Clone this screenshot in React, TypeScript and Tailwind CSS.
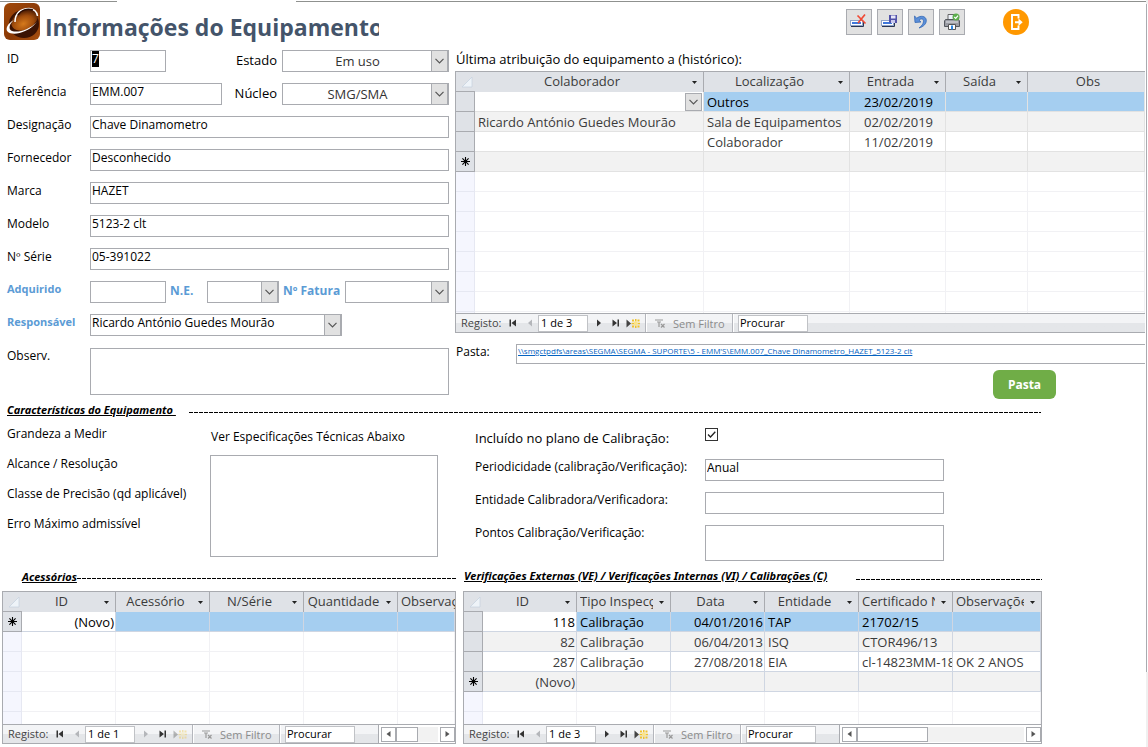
import { useEffect, useRef } from "react";
import type { ReactNode } from "react";

const fieldBox = "border border-[#a9abb0] bg-white text-xs leading-4 text-black outline-none";
const heading = "font-['Noto_Sans','Open_Sans',sans-serif] text-[11px] leading-4 font-bold italic underline";

function Chevron() {
  return (
    <svg viewBox="0 0 9 6" className="h-[6px] w-[9px]" fill="none" stroke="#555" strokeWidth="1.2">
      <path d="M0.5 0.8 L4.5 4.8 L8.5 0.8" />
    </svg>
  );
}

function Combo({ id, value, className, center }: { id: string; value: string; className: string; center?: boolean }) {
  return (
    <div className={`relative h-[22px] shrink-0 ${className}`}>
      <select
        id={id}
        defaultValue={value}
        className={`block h-full w-full appearance-none border border-[#a9abb0] bg-white outline-none ${
          center ? "pr-4 text-center text-[13px] leading-5 text-[#333]" : "pr-4 pb-1 pl-px text-xs leading-4 text-black"
        }`}
      >
        <option value={value}>{value}</option>
      </select>
      <span className="pointer-events-none absolute inset-y-0 right-0 flex w-[18px] items-center justify-center border border-r-2 border-[#a9abb0] bg-[#e1e1e1]">
        <Chevron />
      </span>
    </div>
  );
}

function Field({ id, value, className }: { id: string; value?: string; className: string }) {
  return <input id={id} type="text" defaultValue={value} className={`h-[22px] min-w-0 pb-[5px] pl-px ${fieldBox} ${className}`} />;
}

function FormRow({ id, label, blue, children }: { id: string; label: string; blue?: boolean; children: ReactNode }) {
  return (
    <div className="flex h-[33px] items-start">
      <label htmlFor={id} className={`w-[83px] shrink-0 leading-4 ${blue ? "text-[11px] font-bold text-[#5b9bd5]" : "pt-px text-xs"}`}>
        {label}
      </label>
      {children}
    </div>
  );
}

function Dashes({ className }: { className: string }) {
  return <div className={`h-px bg-[repeating-linear-gradient(90deg,#000_0_4px,transparent_4px_5px)] ${className}`} />;
}

function Asterisk() {
  return (
    <svg viewBox="0 0 9 9" className="mx-auto block size-[9px]" stroke="#000" strokeWidth="1.1">
      <path d="M4.5 0V9M0 4.5H9M1.4 1.4L7.6 7.6M7.6 1.4L1.4 7.6" />
    </svg>
  );
}

type Column = { label: string; width: string; align?: string; menu?: boolean };
type Row = { cells: ReactNode[]; current?: boolean; fresh?: boolean };

function Datasheet({ label, columns, rows, blank, height, line }: {
  label: string;
  columns: Column[];
  rows: Row[];
  blank: number;
  height: string;
  line: string;
}) {
  return (
    <div className={`overflow-hidden ${height}`}>
      <table aria-label={label} className="w-full table-fixed border-separate border-spacing-0 text-[13px] leading-[18px] text-[#3b3b3b]">
        <thead>
          <tr className="h-5 bg-[#dfe2e7]">
            <th className="h-5 w-[19px] border-b border-[#a9abb0] p-0">
              <svg viewBox="0 0 12 12" className="ml-[5px] block size-3">
                <path d="M11 1V11H1Z" fill="#eef3f8" stroke="#c8d3e0" strokeWidth="0.8" />
              </svg>
            </th>
            {columns.map((c, i) => (
              <th
                key={c.label}
                className={`h-5 p-0 pb-[2px] font-normal ${c.width} ${i < columns.length - 1 ? "border-r border-[#a9abb0]" : ""}`}
              >
                <div className="flex items-center pl-[3px]">
                  <span className="min-w-0 flex-1 overflow-hidden whitespace-nowrap text-center">{c.label}</span>
                  {c.menu !== false && (
                    <svg viewBox="0 0 5 3" className="mt-[2px] mr-[6px] ml-[6px] h-[3px] w-[5px] shrink-0">
                      <path d="M0 0H5L2.5 3Z" fill="#222" />
                    </svg>
                  )}
                </div>
              </th>
            ))}
          </tr>
        </thead>
        <tbody>
          {rows.map((r, ri) => (
            <tr key={ri} className={ri % 2 ? "bg-[#f2f2f2]" : "bg-white"}>
              <td className="h-5 border-r border-b border-[#a9abb0] bg-[#dfe2e7] p-0">{r.fresh && <Asterisk />}</td>
              {columns.map((c, i) => (
                <td
                  key={c.label}
                  className={`h-5 overflow-hidden whitespace-nowrap border-r border-b p-0 pr-px pl-[3px] ${line} ${c.align ?? ""} ${
                    r.current && i > 0 ? "bg-[#a5cef0] text-black" : ""
                  } ${r.current && i === 0 ? "text-black" : ""}`}
                >
                  {r.cells[i]}
                </td>
              ))}
            </tr>
          ))}
          {Array.from({ length: blank }, (_, ri) => (
            <tr key={`blank-${ri}`}>
              <td className="h-5 border-r border-b border-[#e6e8f2] bg-[#f5f6fe] p-0" />
              {columns.map((c) => (
                <td key={c.label} className="h-5 border-r border-b border-[#f1f1f4] p-0" />
              ))}
            </tr>
          ))}
        </tbody>
      </table>
    </div>
  );
}

function NavButton({ label, dim, className, children }: { label: string; dim?: boolean; className: string; children: ReactNode }) {
  return (
    <button type="button" aria-label={label} className={`shrink-0 ${dim ? "text-[#b4b6ba]" : "text-[#333]"} ${className}`}>
      <svg viewBox="0 0 8 8" className="block size-2" fill="currentColor">
        {children}
      </svg>
    </button>
  );
}

function Navigator({ id, count, atEnd, thumb }: { id: string; count: string; atEnd?: boolean; thumb?: string }) {
  return (
    <div className="flex h-5 items-center border-y border-[#a9abb0] bg-linear-to-b from-[#f3f4f6] from-50% to-[#e4e6e9] to-50% pl-[5px] text-[11px] leading-4 text-[#444]">
      <label htmlFor={`${id}-pos`} className="w-[48px] shrink-0">Registo:</label>
      <NavButton label="Primeiro registo" className="w-[17px]">
        <path d="M0.500 0.500H2V7.500H0.500ZM7 0.500V7.500L2.5 4Z" />
      </NavButton>
      <NavButton label="Registo anterior" dim className="w-[12px]">
        <path d="M6 0.500V7.500L2 4Z" />
      </NavButton>
      <input id={`${id}-pos`} defaultValue={count} className="h-[17px] w-[50px] shrink-0 border border-[#c0c2c6] bg-white pb-px pl-[2px] text-black outline-none" />
      <NavButton label="Registo seguinte" dim={atEnd} className="ml-[8px] w-[16px]">
        <path d="M1 0.500V7.500L5 4Z" />
      </NavButton>
      <NavButton label="Último registo" className="w-[14px]">
        <path d="M0.5 0.500V7.500L5 4ZM5.5 0.500H7V7.500H5.5Z" />
      </NavButton>
      <button type="button" aria-label="Novo registo" className={`w-[19px] shrink-0 ${atEnd ? "opacity-35" : ""}`}>
        <svg viewBox="0 0 14 9" className="block h-[9px] w-[14px]">
          <path d="M0.5 0.5V8.5L5 4.5Z" fill="#444" />
          <g fill="#f0c22c">
            <path d="M6 0.500H8V2.500H6ZM9 0H10.500V2.500H9ZM11.500 0.500H13.500V2.500H11.500ZM5.500 3.700H8V5.300H5.500ZM11.500 3.700H14V5.300H11.500ZM6 6.500H8V8.500H6ZM9 6.500H10.500V9H9ZM11.500 6.500H13.500V8.500H11.500Z" />
          </g>
          <rect x="8" y="2.500" width="3.500" height="4" fill="#fbe48a" />
        </svg>
      </button>
      <span className="h-full w-[2px] shrink-0 border-r border-white bg-[#b4b6bc]" />
      <button type="button" className="flex w-[85px] shrink-0 items-center gap-2 pt-px pl-2 text-[#8b8b8b]">
        <svg viewBox="0 0 10 9" className="h-[9px] w-[10px]" fill="none" stroke="#999" strokeWidth="1.2">
          <path d="M0 1H8M2 3H6M4 3V8M6 5L9.5 8.5M9.5 5L6 8.5" />
        </svg>
        Sem Filtro
      </button>
      <span className="h-full w-[2px] shrink-0 border-r border-white bg-[#b4b6bc]" />
      <input
        aria-label="Procurar"
        defaultValue="Procurar"
        className="ml-1 h-[17px] w-[70px] shrink-0 border border-[#c0c2c6] bg-white pb-px pl-px text-black outline-none"
      />
      {thumb && (
        <div className="ml-[23px] flex h-full min-w-0 flex-1 items-center border-l border-[#a9abb0] bg-white pl-[2px]">
          <button type="button" aria-label="Deslocar para a esquerda" className="flex h-[15px] w-[15px] shrink-0 items-center justify-center border border-[#a9abb0] bg-white">
            <svg viewBox="0 0 5 8" className="h-2 w-[5px]"><path d="M4.500 1V7L0.500 4Z" fill="#555" /></svg>
          </button>
          <div className="h-[15px] min-w-0 flex-1 bg-[#f2f2f2]">
            <div className={`h-full border border-[#a9abb0] bg-white ${thumb}`} />
          </div>
          <button type="button" aria-label="Deslocar para a direita" className="ml-[2px] flex h-[15px] w-[15px] shrink-0 items-center justify-center border border-[#a9abb0] bg-white">
            <svg viewBox="0 0 5 8" className="h-2 w-[5px]"><path d="M0.500 1V7L4.500 4Z" fill="#555" /></svg>
          </button>
        </div>
      )}
    </div>
  );
}

function Logo() {
  return (
    <svg viewBox="0 0 36 37" className="h-[37px] w-9 shrink-0" aria-hidden="true">
      <defs>
        <linearGradient id="tile" x1="0" y1="0" x2="1" y2="1">
          <stop offset="0" stopColor="#a1490a" />
          <stop offset="0.55" stopColor="#8b3a06" />
          <stop offset="1" stopColor="#a85010" />
        </linearGradient>
        <radialGradient id="orb" cx="0.4" cy="0.65" r="0.7">
          <stop offset="0" stopColor="#d67a1c" />
          <stop offset="0.55" stopColor="#a04c0c" />
          <stop offset="1" stopColor="#3a1202" />
        </radialGradient>
      </defs>
      <rect width="36" height="37" rx="6" fill="url(#tile)" />
      <ellipse cx="20" cy="21" rx="15" ry="14" fill="#3b1303" />
      <ellipse cx="20.500" cy="17" rx="14" ry="9.500" transform="rotate(-28 20.500 17)" fill="url(#orb)" />
      <path d="M11 19C11 10 17 5.500 25 5.500C30 6 33 9 33.500 13" fill="none" stroke="#fff" strokeWidth="1.500" />
      <path d="M14 12C17 7 23 5 29 7" fill="none" stroke="#2a0c02" strokeWidth="1.500" />
      <path d="M10 17C4 20 0.500 26 4 29C9 33 24 30 33 19C25 27 14 30 8 28C4 26.500 5 21 10 17Z" fill="#fff" />
    </svg>
  );
}

function FormGlyph() {
  return (
    <>
      <rect x="0.500" y="7.500" width="12" height="5" fill="#fff" stroke="#8fa3c8" />
      <rect x="2" y="9" width="9" height="2" fill="#3f78dc" />
      <path d="M1 13.500H13.500V8" fill="none" stroke="#2a3550" />
    </>
  );
}

function ToolButton({ label, children }: { label: string; children: ReactNode }) {
  return (
    <button type="button" aria-label={label} title={label} className="flex size-[26px] items-center justify-center border border-[#a9abb0] bg-[#e1e1e1]">
      <svg viewBox="0 0 18 18" className="size-[18px]">{children}</svg>
    </button>
  );
}

function Toolbar() {
  return (
    <div className="flex items-center gap-[5px]">
      <ToolButton label="Eliminar">
        <FormGlyph />
        <path d="M7.500 2.500L15.500 10.500M15 1.500L8 10" stroke="#f04a35" strokeWidth="1.700" fill="none" />
      </ToolButton>
      <ToolButton label="Guardar">
        <FormGlyph />
        <path d="M8 2H16V10H9L8 9Z" fill="#5252a8" />
        <rect x="10" y="2.500" width="4.500" height="3" fill="#e8e8fa" />
        <rect x="10" y="7" width="4" height="3" fill="#c9c9ee" />
      </ToolButton>
      <ToolButton label="Anular">
        <path d="M2.500 3L3 9.500L9 9L7 7.200C9 5.200 11.500 5.500 11.500 8.200C11.500 11 9.500 13 7 15C12 13.500 14.500 10.500 14.300 7.200C14 3 8.500 2 4.800 5.200Z" fill="#5b8fd9" stroke="#3568b4" strokeWidth="0.800" />
      </ToolButton>
      <ToolButton label="Imprimir">
        <path d="M5 7V1.500H12L13 7" fill="#eef2fb" stroke="#666" />
        <path d="M2.500 6.500H15.500L16.500 8V13.500H1.500V8Z" fill="#9a9ca3" stroke="#55585e" />
        <path d="M3 9H15" stroke="#e5e6ea" />
        <path d="M5.500 11.500H12.500V16.500H5.500Z" fill="#fff" stroke="#555" />
        <path d="M9 12.500V16.500" stroke="#2d86e0" strokeWidth="2" />
        <circle cx="13" cy="4" r="3.500" fill="#5cae4c" />
        <path d="M11.300 4L12.700 5.400L15 2.600" fill="none" stroke="#fff" strokeWidth="1.200" />
      </ToolButton>
      <button type="button" aria-label="Sair" className="ml-[33px] block size-[26px] rounded-full">
        <svg viewBox="0 0 26 26" className="size-[26px]">
          <circle cx="13" cy="13" r="13" fill="#ff9800" />
          <path d="M15.500 9.500V6H9V20H15.500V16.500" fill="none" stroke="#fff" strokeWidth="1.900" />
          <path d="M12 12.200H15.500V9.500L19.700 13.200L15.500 17V14.200H12Z" fill="#fff" />
        </svg>
      </button>
    </div>
  );
}

const historyColumns: Column[] = [
  { label: "Colaborador", width: "w-[229px]" },
  { label: "Localização", width: "w-[146px]" },
  { label: "Entrada", width: "w-[96px]", align: "text-center" },
  { label: "Saída", width: "w-[82px]" },
  { label: "Obs", width: "", menu: false },
];

const historyRows: Row[] = [
  {
    current: true,
    cells: [
      <div key="pick" className="flex h-[18px] justify-end">
        <button type="button" aria-label="Escolher colaborador" className="flex w-[17px] items-center justify-center border border-[#a9abb0] bg-[#e1e1e1]">
          <Chevron />
        </button>
      </div>,
      "Outros",
      "23/02/2019",
    ],
  },
  { cells: ["Ricardo António Guedes Mourão", "Sala de Equipamentos", "02/02/2019"] },
  { cells: ["", "Colaborador", "11/02/2019"] },
  { fresh: true, cells: [] },
];

const accessoryColumns: Column[] = [
  { label: "ID", width: "w-[94px]", align: "text-right" },
  { label: "Acessório", width: "w-[94px]" },
  { label: "N/Série", width: "w-[94px]" },
  { label: "Quantidade", width: "w-[94px]" },
  { label: "Observações", width: "", menu: false },
];

const checkColumns: Column[] = [
  { label: "ID", width: "w-[94px]", align: "text-right" },
  { label: "Tipo Inspecção", width: "w-[94px]" },
  { label: "Data", width: "w-[94px]", align: "text-right" },
  { label: "Entidade", width: "w-[94px]" },
  { label: "Certificado N", width: "w-[94px]" },
  { label: "Observações", width: "" },
];

const checkRows: Row[] = [
  { current: true, cells: ["118", "Calibração", "04/01/2016", "TAP", "21702/15"] },
  { cells: ["82", "Calibração", "06/04/2013", "ISQ", "CTOR496/13"] },
  { cells: ["287", "Calibração", "27/08/2018", "EIA", "cl-14823MM-18", "OK 2 ANOS"] },
  { fresh: true, cells: ["(Novo)"] },
];

export default function App() {
  const idField = useRef<HTMLInputElement>(null);

  useEffect(() => {
    idField.current?.focus();
    idField.current?.select();
  }, []);

  return (
    <div className="flex min-h-screen bg-white font-['Open_Sans','Noto_Sans',sans-serif] text-xs leading-4 text-black">
      <main className="min-w-0 flex-1">
        <div className="flex h-[3px] items-center">
          <span className="h-px w-[117px] bg-[#8f918f]" />
          <span className="ml-[179px] h-px flex-1 bg-[#8f918f]" />
        </div>

        <div className="flex">
          <section className="w-[455px] shrink-0">
            <header className="flex h-[47px] items-start gap-[5px] pl-1">
              <Logo />
              <h1 className="w-[334px] overflow-hidden pt-2 text-[23px] leading-8 font-bold whitespace-nowrap text-[#44546a]">
                Informações do Equipamento
              </h1>
            </header>

            <form className="pr-[6px] pl-[7px]">
              <FormRow id="id" label="ID">
                <input
                  ref={idField}
                  id="id"
                  defaultValue="7"
                  className={`h-[22px] w-[76px] pb-[5px] pl-px selection:bg-black selection:text-white ${fieldBox}`}
                />
                <label htmlFor="estado" className="ml-auto pr-[5px] text-[13px] leading-5">Estado</label>
                <Combo id="estado" value="Em uso" className="w-[167px]" center />
              </FormRow>
              <FormRow id="ref" label="Referência">
                <Field id="ref" value="EMM.007" className="w-[132px]" />
                <label htmlFor="nucleo" className="ml-auto pr-[5px] text-[13px] leading-5">Núcleo</label>
                <Combo id="nucleo" value="SMG/SMA" className="w-[167px]" center />
              </FormRow>
              <FormRow id="desig" label="Designação">
                <Field id="desig" value="Chave Dinamometro" className="flex-1" />
              </FormRow>
              <FormRow id="forn" label="Fornecedor">
                <Field id="forn" value="Desconhecido" className="flex-1" />
              </FormRow>
              <FormRow id="marca" label="Marca">
                <Field id="marca" value="HAZET" className="flex-1" />
              </FormRow>
              <FormRow id="modelo" label="Modelo">
                <Field id="modelo" value="5123-2 clt" className="flex-1" />
              </FormRow>
              <FormRow id="serie" label="Nº Série">
                <Field id="serie" value="05-391022" className="flex-1" />
              </FormRow>
              <FormRow id="adq" label="Adquirido" blue>
                <Field id="adq" className="w-[76px]" />
                <label htmlFor="ne" className="w-[41px] pl-1 text-xs leading-5 font-bold text-[#5b9bd5]">N.E.</label>
                <Combo id="ne" value="" className="w-[72px]" />
                <label htmlFor="fatura" className="pl-1 text-xs leading-5 font-bold whitespace-nowrap text-[#5b9bd5]">
                  Nº Fatura
                </label>
                <Combo id="fatura" value="" className="ml-auto w-[104px]" />
              </FormRow>
              <FormRow id="resp" label="Responsável" blue>
                <Combo id="resp" value="Ricardo António Guedes Mourão" className="w-[252px]" />
              </FormRow>
              <div className="flex items-start pt-px">
                <label htmlFor="obs" className="w-[83px] shrink-0">Observ.</label>
                <textarea id="obs" className={`h-[47px] flex-1 resize-none ${fieldBox}`} />
              </div>
            </form>
          </section>

          <section className="min-w-0 flex-1 pr-px">
            <div className="flex h-[46px] items-start justify-end pt-[6px] pr-[116px]">
              <Toolbar />
            </div>
            <h2 className="h-[22px] pl-px text-[13px] leading-5">Última atribuição do equipamento a (histórico):</h2>
            <div className="border-t border-l border-[#a9abb0]">
              <Datasheet
                label="Histórico de atribuições"
                columns={historyColumns}
                rows={historyRows}
                blank={8}
                height="h-[241px]"
                line="border-[#e2e2e2]"
              />
              <Navigator id="hist" count="1 de 3" />
            </div>
            <div className="flex pt-[11px]">
              <span className="w-[61px] shrink-0 pl-px">Pasta:</span>
              <div className="h-5 min-w-0 flex-1 overflow-hidden border-y border-l border-[#a9abb0] pl-px leading-3">
                <a href="#pasta" className="block text-[8px] leading-3 whitespace-nowrap text-[#0563c1] underline">
                  {"\\\\smgctpdfs\\areas\\SEGMA\\SEGMA - SUPORTE\\5 - EMM'S\\EMM.007_Chave Dinamometro_HAZET_5123-2 clt"}
                </a>
              </div>
            </div>
            <div className="flex justify-end pt-[6px] pr-[89px]">
              <button type="button" className="h-[29px] w-[63px] rounded-md bg-[#70ad47] text-xs font-bold text-white">Pasta</button>
            </div>
          </section>
        </div>

        <div className="max-w-[1041px]">
          <div className="flex h-[24px] items-start pt-[3px] pl-[7px]">
            <h2 className={`w-[182px] whitespace-pre ${heading}`}>Características do Equipamento </h2>
            <Dashes className="mt-[10px] flex-1" />
          </div>

          <div className="flex h-[144px] items-start pt-[2px] pl-[7px]">
            <ul className="w-[203px] space-y-[14px] pt-px">
              <li>Grandeza a Medir</li>
              <li>Alcance / Resolução</li>
              <li>Classe de Precisão (qd aplicável)</li>
              <li>Erro Máximo admissível</li>
            </ul>
            <div className="w-[228px] pt-1">
              <label htmlFor="specs" className="block h-[26px] pl-px">Ver Especificações Técnicas Abaixo</label>
              <textarea id="specs" className={`block h-[102px] w-full resize-none ${fieldBox}`} />
            </div>
            <div className="ml-[37px] flex flex-col gap-[11px]">
              <div className="flex h-[23px] items-start pt-[3px]">
                <label htmlFor="plano" className="w-[230px] text-[13px] leading-5">Incluído no plano de Calibração:</label>
                <span className="relative block size-[13px]">
                  <input id="plano" type="checkbox" defaultChecked className="peer block size-[13px] appearance-none border border-[#333] bg-white" />
                  <svg viewBox="0 0 13 13" className="pointer-events-none absolute inset-0 hidden peer-checked:block" fill="none" stroke="#222" strokeWidth="1.300">
                    <path d="M3 6.500L5.500 9L10.300 3.700" />
                  </svg>
                </span>
              </div>
              <div className="flex items-start">
                <label htmlFor="period" className="w-[230px]">Periodicidade (calibração/Verificação):</label>
                <Field id="period" value="Anual" className="w-[239px]" />
              </div>
              <div className="flex items-start">
                <label htmlFor="entid" className="w-[230px]">Entidade Calibradora/Verificadora:</label>
                <Field id="entid" className="w-[239px]" />
              </div>
              <div className="flex items-start">
                <label htmlFor="pontos" className="w-[230px]">Pontos Calibração/Verificação:</label>
                <textarea id="pontos" className={`block h-[36px] w-[239px] resize-none ${fieldBox}`} />
              </div>
            </div>
          </div>
        </div>

        <div className="flex max-w-[1042px] gap-[7px] pl-[2px]">
          <section className="w-[454px] shrink-0">
            <div className="flex h-[24px] items-start pl-5">
              <h2 className={`pt-[2px] ${heading}`}>Acessórios</h2>
              <Dashes className="mt-[11px] flex-1" />
            </div>
            <div className="border-x border-t border-[#a9abb0]">
              <Datasheet
                label="Acessórios"
                columns={accessoryColumns}
                rows={[{ current: true, fresh: true, cells: ["(Novo)"] }]}
                blank={5}
                height="h-[132px]"
                line="border-[#cfd6e2]"
              />
              <Navigator id="acc" count="1 de 1" atEnd thumb="w-[22px]" />
            </div>
          </section>
          <section className="min-w-0 flex-1">
            <div className="flex h-[24px] items-start pl-px">
              <h2 className={`w-[392px] pt-px whitespace-nowrap ${heading}`}>
                Verificações Externas (VE) / Verificações Internas (VI) / Calibrações (C)
              </h2>
              <Dashes className="mt-[12px] flex-1" />
            </div>
            <div className="border-x border-t border-[#a9abb0]">
              <Datasheet
                label="Verificações e calibrações"
                columns={checkColumns}
                rows={checkRows}
                blank={2}
                height="h-[132px]"
                line="border-[#cfd6e2]"
              />
              <Navigator id="ver" count="1 de 3" thumb="w-[71px]" />
            </div>
          </section>
        </div>
      </main>
      <aside className="w-[2px] shrink-0 bg-[#f0f0f0] pt-1">
        <div className="h-[668px] border-l border-[#a9abb0] bg-white" />
      </aside>
    </div>
  );
}
